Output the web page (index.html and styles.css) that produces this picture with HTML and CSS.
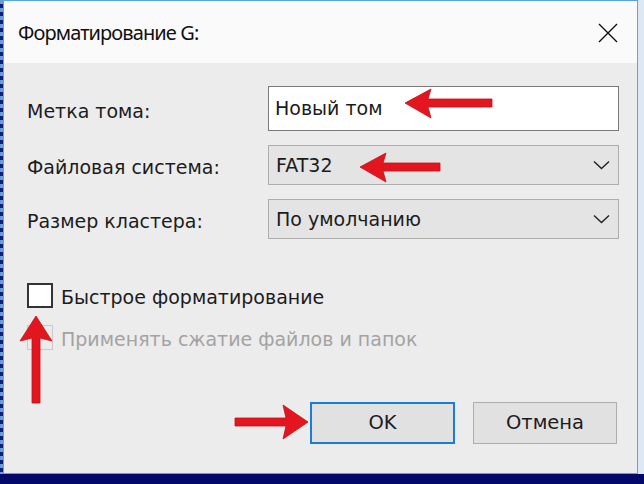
FILE: index.html
```html
<!DOCTYPE html>
<html lang="ru">
<head>
<meta charset="utf-8">
<title>Форматирование G:</title>
<link rel="stylesheet" href="styles.css">
</head>
<body>
<div class="screen">
  <div class="edge-left"></div>
  <div class="window">
    <div class="titlebar">
      <span class="title">Форматирование G:</span>
      <svg class="close" width="20" height="20" viewBox="0 0 20 20"><path d="M1 1L19 19M19 1L1 19" stroke="#111" stroke-width="1.4" fill="none"/></svg>
    </div>
    <div class="content">
      <div class="form">
        <div class="label">Метка тома:</div>
        <div class="field input">Новый том</div>
        <div class="label">Файловая система:</div>
        <div class="field combo"><span>FAT32</span><svg width="17" height="10" viewBox="0 0 17 10"><path d="M1 1.5L8.5 8.5L16 1.5" stroke="#222" stroke-width="1.4" fill="none"/></svg></div>
        <div class="label">Размер кластера:</div>
        <div class="field combo"><span>По умолчанию</span><svg width="17" height="10" viewBox="0 0 17 10"><path d="M1 1.5L8.5 8.5L16 1.5" stroke="#222" stroke-width="1.4" fill="none"/></svg></div>
      </div>
      <div class="checks">
        <div class="check"><span class="box"></span><span class="check-text">Быстрое форматирование</span></div>
        <div class="check disabled"><span class="box"></span><span class="check-text">Применять сжатие файлов и папок</span></div>
      </div>
      <div class="buttons">
        <div class="btn primary">OK</div>
        <div class="btn">Отмена</div>
      </div>
    </div>
  </div>
  <div class="edge-right"></div>
</div>
<svg class="arrows" width="644" height="484" viewBox="0 0 644 484">
  <g fill="#e3161f" stroke="#c40f18" stroke-width="0.8" stroke-linejoin="round">
    <polygon points="405,103 431,89 428,99 492,99 492,107 428,107 431,118"/>
    <polygon points="360,167 386,153 383,163 440,163 440,171 383,171 386,182"/>
    <polygon points="36,316 52,341 40,338 40,403 32,403 32,338 20,341"/>
    <polygon points="308,422 283,405 286,418 235,418 235,426 286,426 283,439"/>
  </g>
</svg>
</body>
</html>
```

FILE: styles.css
```css
html, body {
  margin: 0;
  padding: 0;
}
body {
  width: 644px;
  height: 484px;
  overflow: hidden;
  position: relative;
  background: #03096b;
  font-family: "DejaVu Sans", "Liberation Sans", sans-serif;
  color: #1c1c1c;
}
.screen {
  display: flex;
  height: 474px;
}
.edge-left {
  width: 3px;
  background: repeating-linear-gradient(to bottom, #6c9bd6 0 4px, #0d1f78 4px 8px);
}
.window {
  width: 635px;
  height: 474px;
  box-sizing: border-box;
  border: 1px solid #5aa3e6;
  display: flex;
  flex-direction: column;
}
.edge-right {
  flex: 1;
  background: #dce8f4;
}
.titlebar {
  height: 62px;
  background: #fafafa;
  display: flex;
  align-items: center;
  justify-content: space-between;
  padding: 0 19px 0 14px;
}
.title {
  font-family: "Noto Sans", "Open Sans", sans-serif;
  font-size: 20px;
  letter-spacing: -0.9px;
  color: #111;
  padding-top: 1px;
}
.close {
  display: block;
  margin-top: 2px;
}
.content {
  flex: 1;
  background: #ececec;
  padding: 23px 18px 0 23px;
  display: flex;
  flex-direction: column;
}
.form {
  display: grid;
  grid-template-columns: 241px 1fr;
  grid-template-rows: 45px 40px 40px;
  row-gap: 14px;
  align-items: center;
}
.label {
  font-size: 19px;
  padding-top: 4px;
}
.field {
  height: 100%;
  box-sizing: border-box;
  display: flex;
  align-items: center;
  font-size: 19px;
}
.input {
  background: #ffffff;
  border: 1px solid #7a7a7a;
  padding: 0 6px 1px;
}
.combo {
  background: #e4e4e4;
  border: 1px solid #adadad;
  padding: 0 8px 0 7px;
  justify-content: space-between;
}
.combo span {
  padding-bottom: 1px;
}
.checks {
  margin-top: 44px;
  display: flex;
  flex-direction: column;
  gap: 17px;
}
.check {
  display: flex;
  align-items: center;
  height: 25px;
}
.box {
  width: 26px;
  height: 25px;
  box-sizing: border-box;
  border: 2px solid #333;
  background: #fff;
}
.check-text {
  margin-left: 8px;
  font-size: 19px;
  padding-top: 2px;
}
.disabled .box {
  border: 1.5px solid #c9c9c9;
  background: #ececec;
}
.disabled .check-text {
  color: #a3a3a3;
}
.buttons {
  margin-top: 52px;
  display: flex;
  justify-content: flex-end;
  gap: 18px;
  padding-right: 2px;
}
.btn {
  width: 144px;
  height: 42px;
  box-sizing: border-box;
  background: #e1e1e1;
  border: 1px solid #adadad;
  display: flex;
  align-items: center;
  justify-content: center;
  font-size: 19.5px;
  padding-bottom: 1px;
}
.btn.primary {
  width: 145px;
  border: 2px solid #1a7fd4;
}
.arrows {
  position: absolute;
  top: 0;
  left: 0;
  pointer-events: none;
}
```
